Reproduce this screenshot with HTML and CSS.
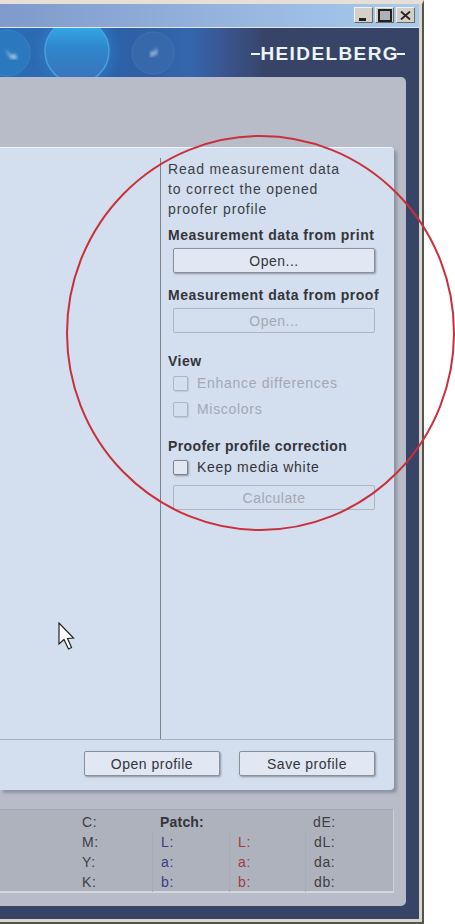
FILE: index.html
```html
<!DOCTYPE html>
<html lang="en">
<head>
  <meta charset="UTF-8">
  <meta name="viewport" content="width=device-width, initial-scale=1.0">
  <link rel="stylesheet" href="styles.css">
</head>
<body>
  <div class="window">
    <div class="window-inner">
      <div class="titlebar">
        <button class="win-btn" aria-label="Minimize"><span class="icon-min"></span></button>
        <button class="win-btn" aria-label="Maximize"><span class="icon-max"></span></button>
        <button class="win-btn" aria-label="Close">
          <svg width="11" height="9" viewBox="0 0 11 9"><path d="M1 0.500L10 8.500M10 0.500L1 8.500" stroke="#222" stroke-width="1.800" fill="none"/></svg>
        </button>
      </div>

      <div class="banner">
        <svg class="banner-art" width="260" height="49" viewBox="0 0 260 49">
          <defs>
            <linearGradient id="orb" x1="0" y1="0" x2="0" y2="1">
              <stop offset="0" stop-color="#35b4ee"/>
              <stop offset="0.45" stop-color="#2f86cb"/>
              <stop offset="1" stop-color="#3c72ba"/>
            </linearGradient>
            <filter id="soft"><feGaussianBlur stdDeviation="1.500"/></filter>
            <filter id="glow"><feGaussianBlur stdDeviation="4"/></filter>
          </defs>
          <circle cx="77" cy="23" r="38" fill="#2f7cc6" filter="url(#glow)" opacity="0.6"/>
          <circle cx="77" cy="23" r="32" fill="url(#orb)" stroke="#4a9fdd" stroke-width="1.500"/>
          <circle cx="153" cy="25" r="21" fill="#3868ac" stroke="#4272b4"/>
          <path d="M150 29L150 24L155 23L156 19L158 25L154 28Z" fill="#8fb0d6" filter="url(#soft)"/>
          <circle cx="7" cy="25" r="23" fill="#2b78bf" stroke="#3784c8"/>
          <path d="M5 21L11 27L16 26L17 31L11 31Z" fill="#9cc6e4" filter="url(#soft)"/>
        </svg>
        <div class="logo">
          <span class="logo-bar"></span>
          <span class="logo-text">HEIDELBERG</span>
          <span class="logo-tail"></span>
        </div>
      </div>

      <div class="content">
        <div class="panel">
          <div class="panel-main">
            <div class="panel-left"></div>
            <div class="sidebar">
              <p class="intro">Read measurement data<br>to correct the opened<br>proofer profile</p>
              <h3 class="head head-print">Measurement data from print</h3>
              <button class="btn btn-wide">Open...</button>
              <h3 class="head head-proof">Measurement data from proof</h3>
              <button class="btn btn-wide" disabled>Open...</button>
              <h3 class="head head-view">View</h3>
              <label class="check check-off check-first"><span class="box"></span>Enhance differences</label>
              <label class="check check-off check-second"><span class="box"></span>Miscolors</label>
              <h3 class="head head-correction">Proofer profile correction</h3>
              <label class="check check-keep"><span class="box"></span>Keep media white</label>
              <button class="btn btn-wide btn-calc" disabled>Calculate</button>
            </div>
          </div>
          <div class="panel-footer">
            <button class="btn btn-footer">Open profile</button>
            <button class="btn btn-footer">Save profile</button>
          </div>
        </div>

        <div class="info">
          <div class="info-col info-cmyk">
            <span>C:</span>
            <div class="info-rows"><span>M:</span><span>Y:</span><span>K:</span></div>
          </div>
          <div class="info-col info-print">
            <span class="patch">Patch:</span>
            <div class="info-rows info-rule"><span>L:</span><span>a:</span><span>b:</span></div>
          </div>
          <div class="info-col info-proof">
            <span>&nbsp;</span>
            <div class="info-rows info-rule"><span>L:</span><span>a:</span><span>b:</span></div>
          </div>
          <div class="info-col info-delta">
            <span>dE:</span>
            <div class="info-rows info-rule"><span>dL:</span><span>da:</span><span>db:</span></div>
          </div>
        </div>
      </div>
    </div>
  </div>

  <!-- marker drawn over the screenshot -->
  <svg class="circle-mark" width="455" height="924" viewBox="0 0 455 924">
    <ellipse cx="260.500" cy="333" rx="193.500" ry="197" fill="none" stroke="#c9303c" stroke-width="2"/>
  </svg>

  <svg class="cursor" width="18" height="30" viewBox="0 0 18 30">
    <path d="M1 1L1 22L6 17.500L10.500 27L13.500 25.500L9.500 16.500L15.500 16Z" fill="#fff" stroke="#222" stroke-width="1.200"/>
  </svg>
</body>
</html>
```

FILE: styles.css
```css
* {
  box-sizing: border-box;
}

html, body {
  margin: 0;
  padding: 0;
  background-color: #fff;
}

body {
  position: relative;
  width: 455px;
  height: 924px;
  overflow: hidden;
  font-family: "Liberation Sans", Arial, sans-serif;
  font-size: 14px;
  color: #333;
}

.window {
  width: 424px;
  height: 924px;
  padding: 0 3px 3px 0;
  background-color: #d9d6cc;
  border-top: 4px solid #e6dfd6;
  border-right: 2px solid #55554f;
  border-bottom: 2px solid #55554f;
}

.window-inner {
  display: flex;
  flex-direction: column;
  height: 100%;
  background-color: #374468;
}

.titlebar {
  display: flex;
  justify-content: flex-end;
  align-items: flex-start;
  gap: 2px;
  height: 24px;
  flex-shrink: 0;
  padding: 3px 4px 0 0;
  background: linear-gradient(to right, #7f9acb, #a8cbee);
  border-bottom: 1px solid #dfe6ee;
}

.win-btn {
  display: flex;
  align-items: center;
  justify-content: center;
  width: 19px;
  height: 16px;
  padding: 0;
  background-color: #d4d0c8;
  border: 1px solid;
  border-color: #f4f2ec #6b6962 #6b6962 #f4f2ec;
}

.icon-min {
  display: block;
  width: 7px;
  height: 3px;
  margin-top: 8px;
  margin-right: 2px;
  background-color: #222;
}

.icon-max {
  display: block;
  width: 14px;
  height: 13px;
  background-color: #aeb2b8;
  border: 2px solid #222;
}

.banner {
  position: relative;
  display: flex;
  justify-content: flex-end;
  align-items: center;
  height: 49px;
  flex-shrink: 0;
  padding-right: 14px;
  background: linear-gradient(to right, #2c6eb6 0, #2c62a8 115px, #2f5fa6 135px, #3366ad 190px, #3b5590 225px, #374468 265px);
  overflow: hidden;
}

.banner-art {
  position: absolute;
  left: 0;
  top: 0;
}

.logo {
  position: relative;
  display: flex;
  align-items: center;
  height: 18px;
  margin-top: 3px;
}

.logo-bar {
  width: 9px;
  height: 2px;
  background-color: #eef3f8;
}

.logo-text {
  font-size: 19px;
  font-weight: bold;
  letter-spacing: 1.4px;
  color: #eef3f8;
}

.logo-tail {
  width: 8px;
  height: 2px;
  margin-left: -2px;
  background-color: #eef3f8;
}

.content {
  display: flex;
  flex-direction: column;
  align-items: flex-end;
  flex: 1;
  width: 406px;
  margin-bottom: 13px;
  padding-top: 70px;
  padding-right: 12px;
  background-color: #b8bcc8;
  border-bottom-right-radius: 5px;
  border-top-right-radius: 5px;
}

.panel {
  display: flex;
  flex-direction: column;
  width: 394px;
  height: 643px;
  background-color: #d3deee;
  border-top: 1px solid #f2f5f9;
  border-top-right-radius: 4px;
  border-bottom-right-radius: 4px;
  box-shadow: 3px 3px 3px #8d94a3;
}

.panel-main {
  display: flex;
  flex: 1;
  min-height: 0;
  padding-top: 10px;
  border-bottom: 1px solid #a9b1c0;
}

.panel-left {
  width: 160px;
}

.sidebar {
  flex: 1;
  padding-left: 7px;
  padding-top: 1px;
  border-left: 1px solid #7f8389;
}

.intro {
  margin: 0;
  line-height: 20px;
  letter-spacing: 0.85px;
  color: #3c3f45;
}

.head {
  margin: 0;
  font-size: 14px;
  line-height: 18px;
  font-weight: bold;
  letter-spacing: 0.5px;
  color: #33353a;
}

.head-print {
  margin-top: 7px;
}

.head-proof {
  margin-top: 13px;
}

.head-view {
  margin-top: 19px;
}

.head-correction {
  margin-top: 20px;
  letter-spacing: 0.4px;
}

.btn {
  display: block;
  height: 25px;
  padding: 0;
  font-family: "Liberation Sans", Arial, sans-serif;
  font-size: 14px;
  letter-spacing: 0.5px;
  color: #33353a;
  background-color: #e1e8f3;
  border: 1px solid #8b8f98;
  border-radius: 2px;
  box-shadow: 1px 1px 2px #8d94a3;
}

.btn[disabled] {
  color: #a3a8b3;
  background-color: #d3deee;
  border-color: #aeb4c0;
  box-shadow: none;
}

.btn-wide {
  width: 202px;
  margin-left: 5px;
  margin-top: 4px;
}

.btn-calc {
  margin-top: 10px;
}

.check {
  display: flex;
  align-items: center;
  gap: 9px;
  height: 16px;
  margin-left: 5px;
  letter-spacing: 0.7px;
  color: #33353a;
}

.check-first {
  margin-top: 5px;
}

.check-second {
  margin-top: 10px;
}

.check-keep {
  margin-top: 4px;
}

.check-off {
  color: #a3a8b3;
}

.box {
  width: 15px;
  height: 15px;
  background-color: #e1e8f3;
  border: 1px solid #80848e;
  border-radius: 2px;
  box-shadow: 1px 1px 2px #8d94a3;
}

.check-off .box {
  background-color: #d3deee;
  border-color: #aeb4c0;
  box-shadow: 1px 1px 1px #c0c6d2;
}

.panel-footer {
  display: flex;
  justify-content: flex-end;
  gap: 19px;
  height: 50px;
  padding: 11px 19px 0 0;
}

.btn-footer {
  width: 136px;
}

.info {
  display: flex;
  width: 394px;
  height: 84px;
  margin-top: 19px;
  padding: 2px 0 0 82px;
  background-color: #aeb2bd;
  border-top: 1px solid #a4a8b3;
  border-right: 1px solid #ccd0da;
  border-bottom: 2px solid #d4d8e2;
}

.info-col {
  display: flex;
  flex-direction: column;
  line-height: 20px;
  letter-spacing: 0.6px;
  color: #3c3f45;
}

.info-rows {
  display: flex;
  flex-direction: column;
}

.info-rule {
  margin-left: -8px;
  padding-left: 8px;
  border-left: 1px solid #a8acb7;
}

.info-cmyk {
  width: 78px;
}

.info-print {
  width: 77px;
  color: #363e88;
}

.info-proof {
  width: 76px;
  color: #a53a3c;
}

.patch {
  font-weight: bold;
  letter-spacing: 0.2px;
  color: #33353a;
  white-space: nowrap;
}

.circle-mark {
  position: absolute;
  left: 0;
  top: 0;
  pointer-events: none;
}

.cursor {
  position: absolute;
  left: 58px;
  top: 622px;
}
```
